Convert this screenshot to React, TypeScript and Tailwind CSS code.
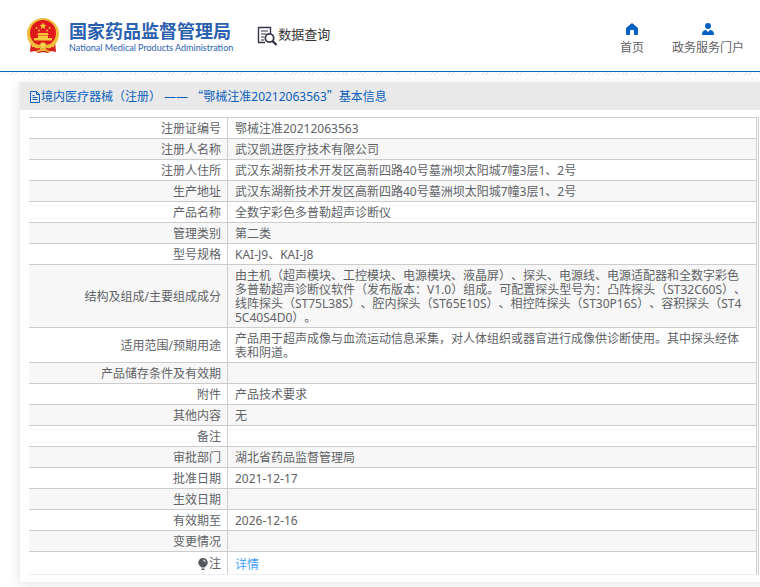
import React from "react";

type Row = { label: string; value: React.ReactNode };

const rows: Row[] = [
  { label: "注册证编号", value: "鄂械注准20212063563" },
  { label: "注册人名称", value: "武汉凯进医疗技术有限公司" },
  { label: "注册人住所", value: "武汉东湖新技术开发区高新四路40号墓洲坝太阳城7幢3层1、2号" },
  { label: "生产地址", value: "武汉东湖新技术开发区高新四路40号墓洲坝太阳城7幢3层1、2号" },
  { label: "产品名称", value: "全数字彩色多普勒超声诊断仪" },
  { label: "管理类别", value: "第二类" },
  { label: "型号规格", value: "KAI-J9、KAI-J8" },
  {
    label: "结构及组成/主要组成成分",
    value:
      "由主机（超声模块、工控模块、电源模块、液晶屏）、探头、电源线、电源适配器和全数字彩色多普勒超声诊断仪软件（发布版本：V1.0）组成。可配置探头型号为：凸阵探头（ST32C60S）、线阵探头（ST75L38S）、腔内探头（ST65E10S）、相控阵探头（ST30P16S）、容积探头（ST45C40S4D0）。",
  },
  {
    label: "适用范围/预期用途",
    value: "产品用于超声成像与血流运动信息采集，对人体组织或器官进行成像供诊断使用。其中探头经体表和阴道。",
  },
  { label: "产品储存条件及有效期", value: "" },
  { label: "附件", value: "产品技术要求" },
  { label: "其他内容", value: "无" },
  { label: "备注", value: "" },
  { label: "审批部门", value: "湖北省药品监督管理局" },
  { label: "批准日期", value: "2021-12-17" },
  { label: "生效日期", value: "" },
  { label: "有效期至", value: "2026-12-16" },
  { label: "变更情况", value: "" },
];

function Emblem() {
  return (
    <svg viewBox="0 0 34 36" className="h-9 w-[34px]" aria-hidden="true">
      <path d="M5 23 4 34l5-1 3 2 5-1 5 1 3-2 5 1-1-11z" fill="#d8201f" />
      <circle cx="17" cy="16" r="16" fill="#f0bd3c" />
      <circle cx="17" cy="15" r="13" fill="#e0191c" />
      <path d="m17 4.500 1 2.300 2.500.2-1.900 1.600.6 2.400L17 9.700l-2.200 1.300.6-2.400-1.900-1.600 2.500-.2z" fill="#f6c93a" />
      <g fill="#f6c93a">
        <circle cx="10.500" cy="10" r=".9" />
        <circle cx="13" cy="12.500" r=".9" />
        <circle cx="21" cy="12.500" r=".9" />
        <circle cx="23.500" cy="10" r=".9" />
        <path d="M12.500 15h9l1.500 2H11zM12 17.500h10V20h4v2.500H8V20h4z" />
      </g>
      <path d="M5 25q12 4 24 0l-1 4q-11 5-22 0z" fill="#f0bd3c" />
      <circle cx="17" cy="27.500" r="3" fill="#f8d558" stroke="#d69a2a" strokeWidth=".8" />
      <path d="M7 29.500q4 3 7 1M27 29.500q-4 3-7 1" fill="none" stroke="#d8201f" strokeWidth="1.800" />
      <path d="M10 34q7-4 14 0" fill="none" stroke="#f0bd3c" strokeWidth="1.500" />
    </svg>
  );
}

function SearchDoc() {
  return (
    <svg viewBox="0 0 21 20" className="h-5 w-[21px]" fill="none" stroke="#34344a" aria-hidden="true">
      <path d="M8 16.500H1.500V1.500h12V7" strokeWidth="1.400" />
      <path d="M4 5h7M4 8h5M4 11h3M4 14h3" strokeWidth="1.200" />
      <circle cx="12.500" cy="12" r="4.200" strokeWidth="1.800" />
      <path d="m15.500 15 4 4" strokeWidth="2.400" />
    </svg>
  );
}

export default function App() {
  return (
    <div lang="zh-CN" className="overflow-hidden bg-white pb-2 font-['Noto_Sans','Noto_Sans_CJK_SC',sans-serif] text-xs text-[#606266] [text-spacing-trim:space-all]">
      <header className="flex h-[72px] items-center border-b border-[#0068b7] pr-4 pl-[26px]">
        <Emblem />
        <div className="ml-[9px] shrink-0 text-[#2b5fb0]">
          <h1 className="font-['Noto_Sans_CJK_SC',sans-serif] text-lg leading-6 font-bold whitespace-nowrap">国家药品监督管理局</h1>
          <p className="font-[Lato,sans-serif] text-[9px] leading-3 whitespace-nowrap">National Medical Products Administration</p>
        </div>
        <a href="#query" className="ml-6 flex shrink-0 items-center font-['Noto_Sans_CJK_SC',sans-serif] text-[13px] leading-5 whitespace-nowrap text-[#333]">
          <SearchDoc />
          <span className="pb-1">数据查询</span>
        </a>
        <nav className="mt-2 ml-auto flex shrink-0 gap-7 leading-[18px]">
          <a href="#home" className="flex flex-col items-center gap-1">
            <svg viewBox="0 0 12 12" className="size-3" fill="#0560c4" aria-hidden="true">
              <path d="M6 0 0 5v6q0 1 1 1h3V8q0-1 1-1h2q1 0 1 1v4h3q1 0 1-1V5z" />
            </svg>
            首页
          </a>
          <a href="#portal" className="flex flex-col items-center gap-1">
            <svg viewBox="0 0 12 12" className="size-3" fill="#0560c4" aria-hidden="true">
              <circle cx="6" cy="3" r="3" />
              <path d="M0 12q0-5 4-5l2 2 2-2q4 0 4 5z" />
            </svg>
            政务服务门户
          </a>
        </nav>
      </header>
      <div className="h-[3px] bg-[repeating-linear-gradient(135deg,#ecece6_0_1px,#fff_1px_3px)]" />

      <main className="mt-[7px] -mr-2 ml-[19px] border border-t-0 border-[#ebeef5] bg-white pb-[7px] shadow-[0_2px_12px_rgba(0,0,0,0.1)]">
        <h2 className="flex h-7 items-center bg-[#e9e9e9] pt-px pl-[9px] whitespace-nowrap text-[#0b5fbd]">
          <svg viewBox="0 0 12 12" className="size-3" fill="none" stroke="currentColor" aria-hidden="true">
            <path d="M1.500.5h6l3 3v8h-9zM7.500.5v3h3M3.500 4.500h2M3.500 6.500h5M3.500 8.500h5" />
          </svg>
          <span>
            境内医疗器械（注册） ——{" "}
            <span className="font-['Noto_Sans_CJK_SC',sans-serif]">“</span>
            鄂械注准20212063563
            <span className="font-['Noto_Sans_CJK_SC',sans-serif]">”</span>
            基本信息
          </span>
        </h2>
        <div className="mx-2 mt-[7px] border-r border-[#ccc] pr-px pl-px">
          <table className="w-full table-fixed border-separate border-spacing-0 border-b border-[#ebeef5] leading-[14px] break-all">
            <colgroup>
              <col className="w-[199px]" />
              <col />
            </colgroup>
            <tbody>
              {rows.map((row) => (
                <tr key={row.label} className="even:bg-[#f7f7f7]">
                  <th scope="row" className="border-t border-r border-[#ccc] px-1.5 pt-1 pb-0.5 text-right font-normal">{row.label}</th>
                  <td className="border-t border-r border-[#ccc] pt-1 pr-2 pb-0.5 pl-[7px]">{row.value}</td>
                </tr>
              ))}
              <tr>
                <th scope="row" className="h-[23px] border-t border-r border-[#ccc] px-1.5 pt-0.5 font-normal">
                  <span className="flex items-center justify-end">
                    <svg viewBox="0 0 12 12" className="size-3" aria-hidden="true">
                      <path d="M6 0a4.500 4.500 0 0 0-3 8l1.500 1.500h3L9 8a4.500 4.500 0 0 0-3-8zM4.500 10.500h3v1.500h-3z" fill="#55585e" />
                      <path d="M6 2q2 0 2.300 2" fill="none" stroke="#fff" />
                    </svg>
                    注
                  </span>
                </th>
                <td className="border-t border-r border-[#ccc] pt-1 pr-2 pl-[7px]">
                  <a href="#detail" className="text-[#409eff]">详情</a>
                </td>
              </tr>
            </tbody>
          </table>
        </div>
      </main>
    </div>
  );
}
